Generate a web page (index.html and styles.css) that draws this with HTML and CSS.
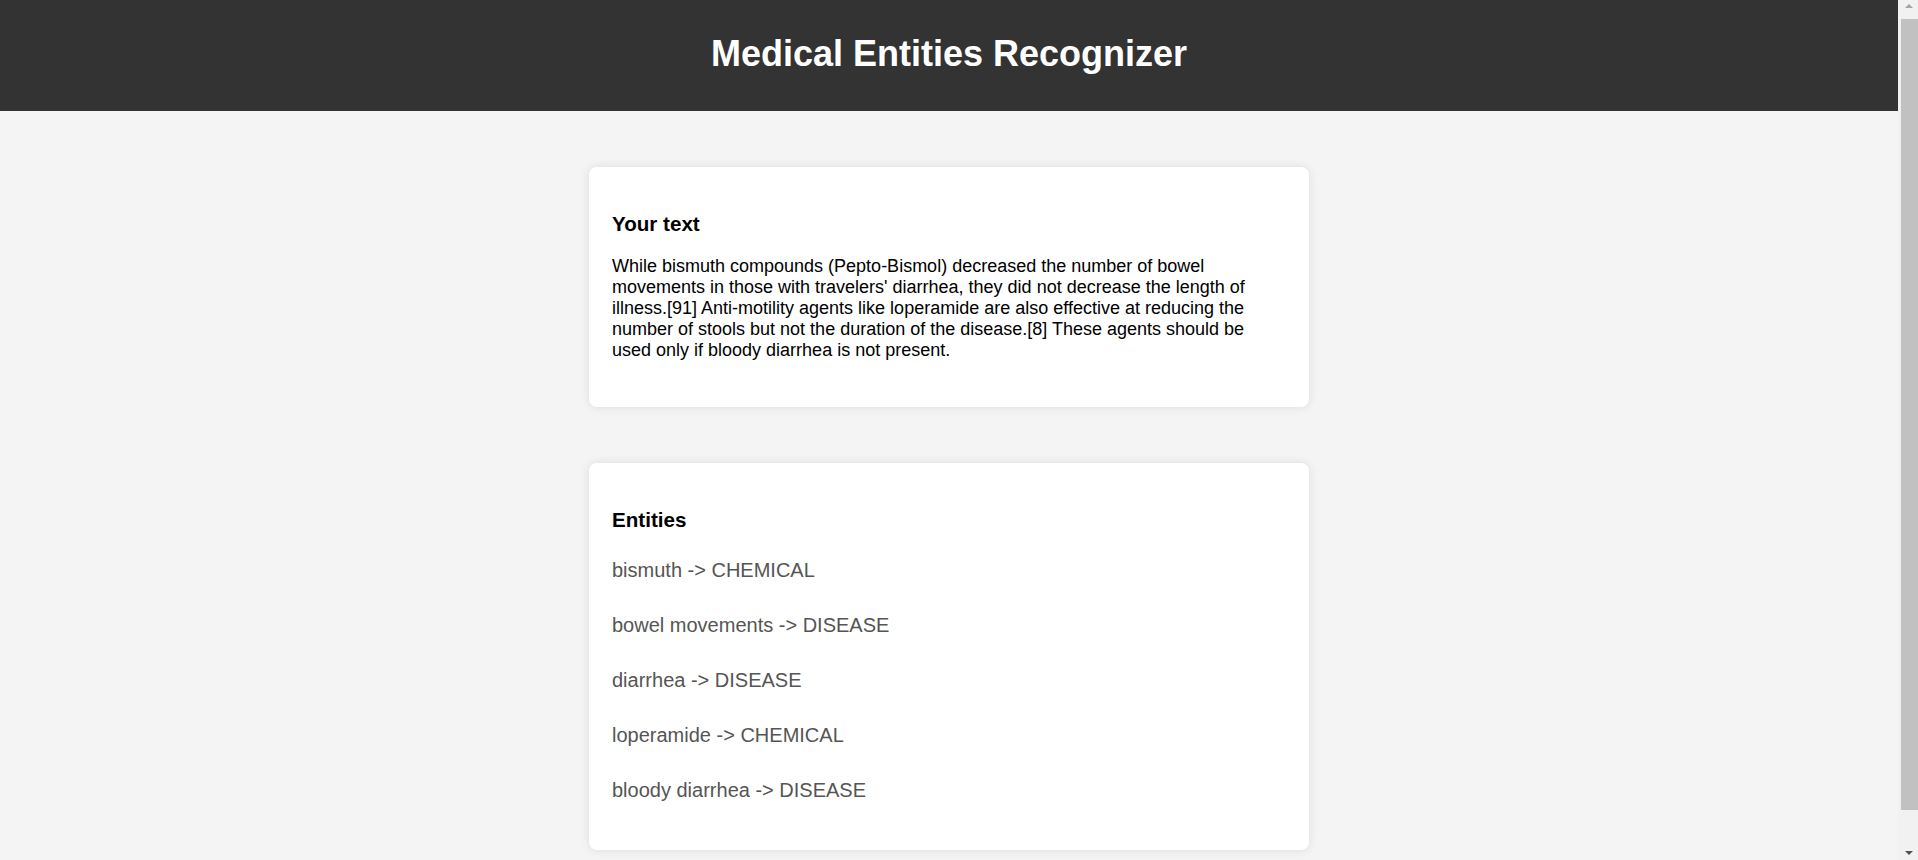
FILE: index.html
```html
<!DOCTYPE html>
<html lang="en">
<head>
<meta charset="utf-8">
<title>Medical Entities Recognizer</title>
<link rel="stylesheet" href="styles.css">
</head>
<body>
<header class="site-header">
  <h1 class="site-title">Medical Entities Recognizer</h1>
</header>
<main class="content">
  <section class="card">
    <h2 class="card-title">Your text</h2>
    <p class="card-text">While bismuth compounds (Pepto-Bismol) decreased the number of bowel movements in those with travelers' diarrhea, they did not decrease the length of illness.[91] Anti-motility agents like loperamide are also effective at reducing the number of stools but not the duration of the disease.[8] These agents should be used only if bloody diarrhea is not present.</p>
  </section>
  <section class="card">
    <h2 class="card-title">Entities</h2>
    <ul class="entity-list">
      <li class="entity">bismuth -&gt; CHEMICAL</li>
      <li class="entity">bowel movements -&gt; DISEASE</li>
      <li class="entity">diarrhea -&gt; DISEASE</li>
      <li class="entity">loperamide -&gt; CHEMICAL</li>
      <li class="entity">bloody diarrhea -&gt; DISEASE</li>
    </ul>
  </section>
</main>
<div class="scrollbar" aria-hidden="true">
  <span class="scrollbar-arrow scrollbar-arrow-up"></span>
  <span class="scrollbar-thumb"></span>
  <span class="scrollbar-arrow scrollbar-arrow-down"></span>
</div>
</body>
</html>
```

FILE: styles.css
```css
html, body {
  margin: 0;
  padding: 0;
}

body {
  background: #f4f4f4;
  font-family: "Liberation Sans", Arial, sans-serif;
  color: #000;
  padding-right: 20px;
}

.site-header {
  background: #333333;
  color: #ffffff;
  text-align: center;
  padding: 33px 0 37px;
}

.site-title {
  margin: 0;
  font-size: 36px;
  font-weight: bold;
  line-height: 41px;
}

.content {
  display: flex;
  flex-direction: column;
  align-items: center;
  gap: 56px;
  padding: 56px 0 48px;
}

.card {
  box-sizing: border-box;
  width: 720px;
  background: #ffffff;
  border-radius: 8px;
  box-shadow: 0 0 10px rgba(0, 0, 0, 0.1);
  padding: 24px 23px;
}

.card-title {
  margin: 21px 0 20px;
  font-size: 20.6px;
  font-weight: bold;
  line-height: 24px;
}

.card-text {
  margin: 0 0 22px;
  font-size: 18px;
  line-height: 21px;
}

.entity-list {
  list-style: none;
  margin: 27px 0 24px;
  padding: 0;
  display: flex;
  flex-direction: column;
  gap: 32px;
}

.entity {
  font-size: 20px;
  line-height: 23px;
  color: #555555;
}

/* imitation of the browser's vertical scrollbar */
.scrollbar {
  position: fixed;
  top: 0;
  right: 0;
  width: 20px;
  height: 100vh;
  background: #f1f1f1;
  display: flex;
  flex-direction: column;
  align-items: flex-end;
}

.scrollbar-arrow {
  width: 17px;
  height: 17px;
  display: flex;
  position: relative;
}

.scrollbar-arrow::before {
  content: "";
  position: absolute;
  left: 4px;
  border-left: 4.5px solid transparent;
  border-right: 4.5px solid transparent;
}

.scrollbar-arrow-up::before {
  top: 4px;
  border-bottom: 4px solid #a3a3a3;
}

.scrollbar-arrow-down::before {
  bottom: 5px;
  border-top: 4px solid #505050;
}

.scrollbar-thumb {
  width: 17px;
  margin-top: 2px;
  height: 791px;
  background: #c1c1c1;
}

.scrollbar-arrow-down {
  margin-top: auto;
}
```
